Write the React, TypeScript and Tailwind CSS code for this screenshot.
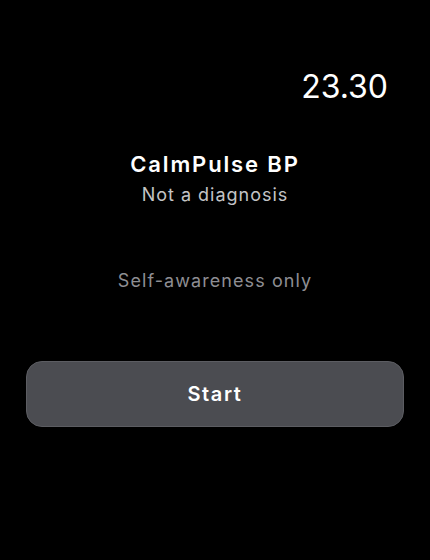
import React from "react";

const App = () => {
  return (
    <div
      className="flex h-[560px] w-[430px] flex-col bg-black text-white"
      style={{ fontFamily: "Inter, 'Noto Sans', sans-serif" }}
    >
      <div className="flex justify-end pr-[42px] pt-[68px]">
        <span className="text-[32px] leading-[38px] font-normal">23.30</span>
      </div>

      <div className="mt-[44px] flex flex-col items-center">
        <h1 className="text-[22px] leading-[28px] font-semibold tracking-[0.085em]">
          CalmPulse BP
        </h1>
        <p className="mt-[5px] text-[18px] leading-[24px] tracking-[0.055em] text-[#c4c4c6]">
          Not a diagnosis
        </p>
      </div>

      <p className="mt-[62px] text-center text-[18px] leading-[24px] tracking-[0.06em] text-[#8e8e93]">
        Self-awareness only
      </p>

      <div className="mt-[68px] px-[26px]">
        <button className="flex h-[66px] w-full items-center justify-center rounded-[16px] border border-[#5c5d62] bg-[#4b4c51] text-[20px] font-semibold tracking-[0.08em] text-white">
          Start
        </button>
      </div>
    </div>
  );
};

export default App;
